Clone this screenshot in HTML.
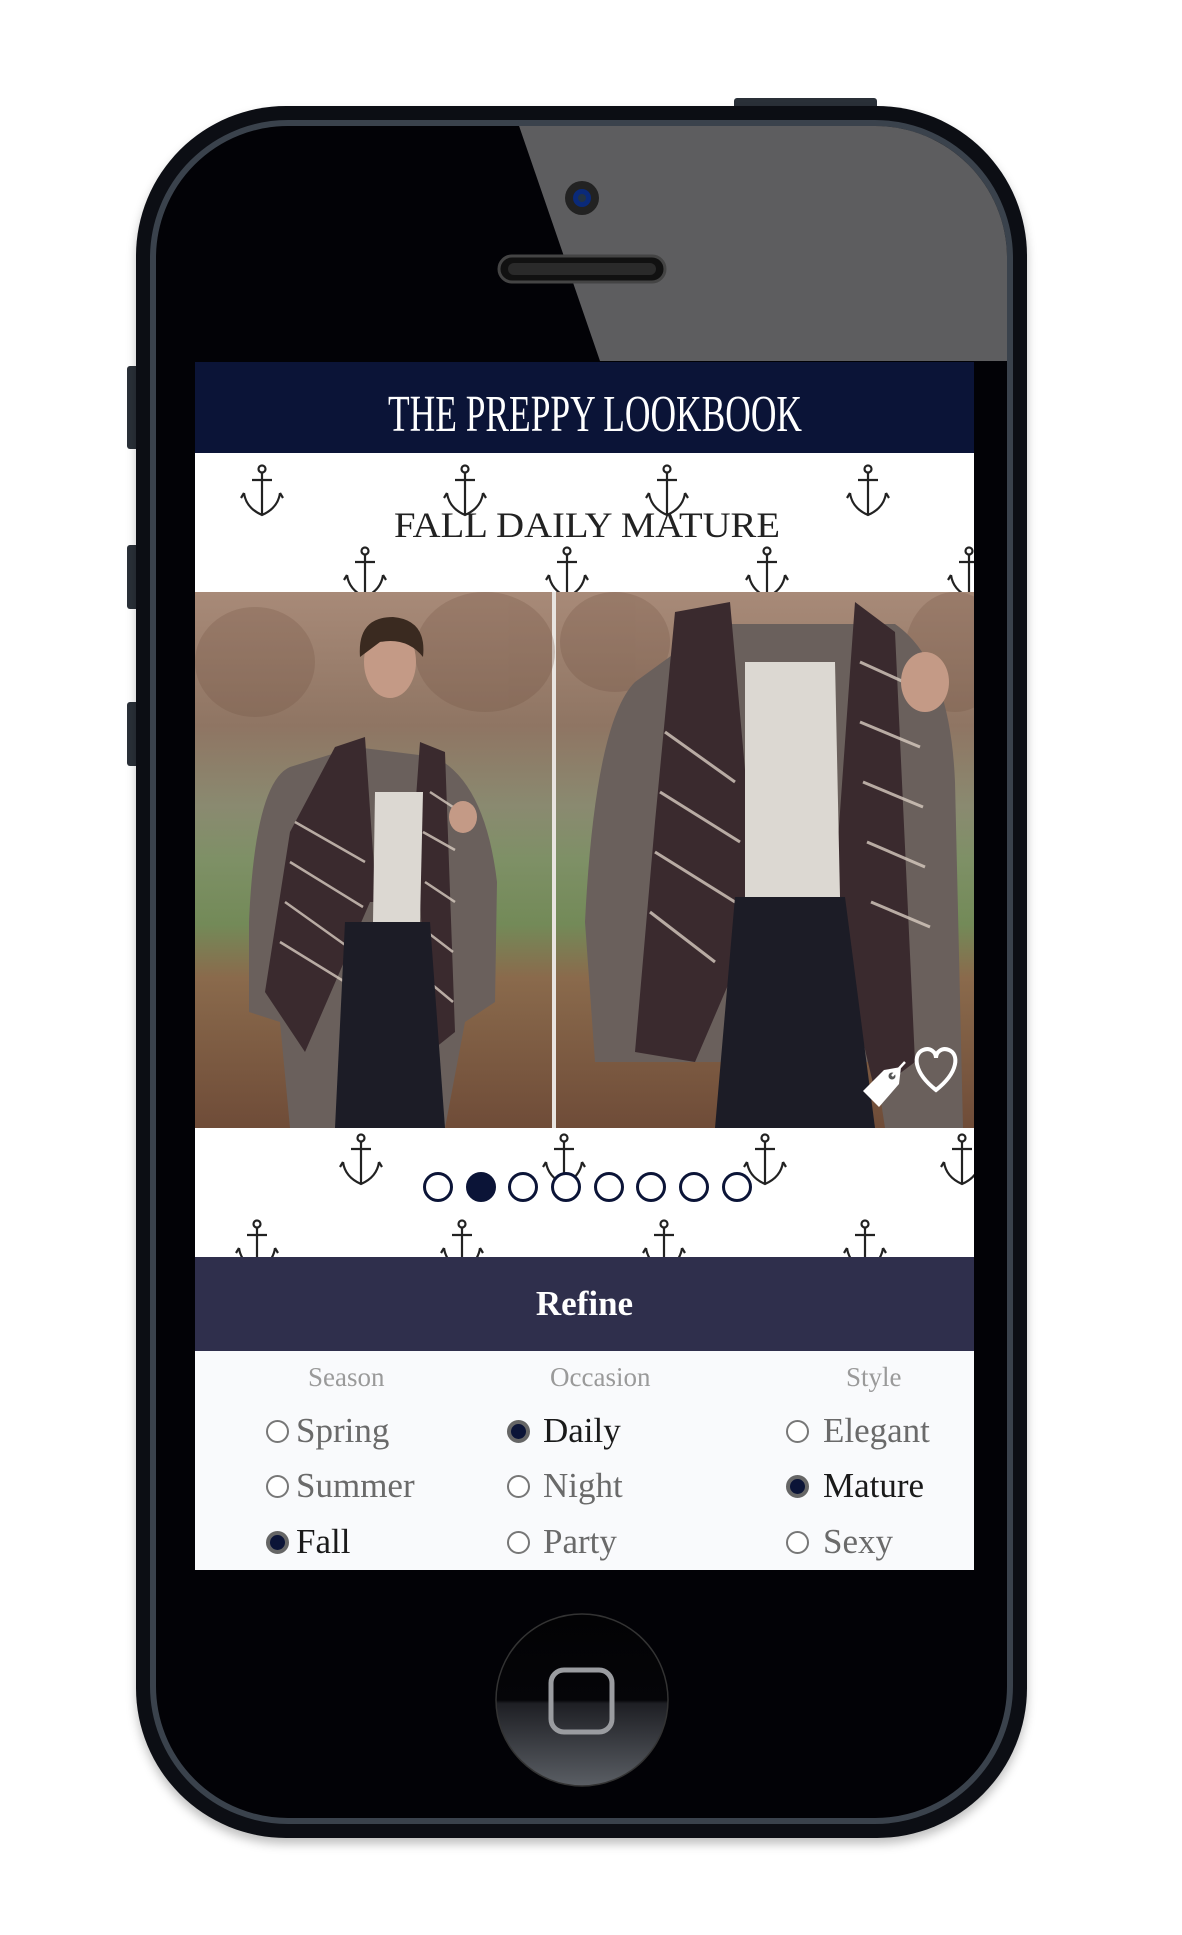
<!DOCTYPE html>
<html><head><meta charset="utf-8">
<style>
*{margin:0;padding:0;box-sizing:border-box}
body{width:1182px;height:1935px;background:#fff;position:relative;overflow:hidden;font-family:"Liberation Serif",serif}
.abs{position:absolute}
.phone{left:136px;top:106px;width:891px;height:1732px;border-radius:150px;background:#0c0e14;box-shadow:0 6px 10px rgba(0,0,0,.25)}
.rim{left:150px;top:120px;width:863px;height:1704px;border-radius:138px;border:6px solid #3a424c;background:#020206}
.screen{left:195px;top:362px;width:779px;height:1208px;background:#fff;overflow:hidden}
.refine{left:0;top:895px;width:779px;height:94px;background:#2f2f4c;color:#fff;text-align:center;font-size:35px;line-height:94px;font-weight:bold}
.opts{left:0;top:989px;width:779px;height:219px;background:#f9fafc}
.lbl{font-size:27px;color:#9a9a9a;line-height:30px}
.opt{font-size:35px;color:#6a6a6a;line-height:40px}
.opt.on{color:#1a1a1a}
.r{width:23px;height:23px;border-radius:50%;border:2px solid #777;background:#fff}
.r.on{background:#0b1437;border:4px solid #666}
.dot{width:30px;height:30px;border-radius:50%;border:3px solid #0b1437;background:#fff;top:810px}
</style></head><body>
<div class="abs" style="left:127px;top:366px;width:12px;height:83px;background:#2a3038;border-radius:3px"></div>
<div class="abs" style="left:127px;top:545px;width:12px;height:64px;background:#2a3038;border-radius:3px"></div>
<div class="abs" style="left:127px;top:702px;width:12px;height:64px;background:#2a3038;border-radius:3px"></div>
<div class="abs" style="left:734px;top:98px;width:143px;height:12px;background:#2a3038;border-radius:3px"></div>
<div class="abs phone"></div>
<div class="abs rim"></div>
<svg class="abs" style="left:0;top:0" width="1182" height="1935">
<defs><clipPath id="c"><rect x="156" y="126" width="851" height="1692" rx="132"/></clipPath></defs>
<polygon clip-path="url(#c)" points="517,120 1010,120 1010,361 600,361" fill="#5d5d5f"/>
<circle cx="582" cy="198" r="17" fill="#222"/><circle cx="582" cy="198" r="9" fill="#0a2a7a"/><circle cx="582" cy="198" r="4" fill="#234"/>
<rect x="499" y="256" width="166" height="26" rx="13" fill="#111" stroke="#444" stroke-width="3"/>
<rect x="508" y="263" width="148" height="12" rx="6" fill="#2a2a2a"/>
<defs><linearGradient id="hb" x1="0" y1="0" x2="0" y2="1"><stop offset="0" stop-color="#020204"/><stop offset=".5" stop-color="#050508"/><stop offset=".52" stop-color="#1e1f24"/><stop offset="1" stop-color="#5a5e64"/></linearGradient></defs>
<circle cx="582" cy="1700" r="86" fill="url(#hb)" stroke="#333" stroke-width="1.5"/>
<rect x="551" y="1670" width="61" height="62" rx="13" fill="none" stroke="#9a9ca0" stroke-width="5"/>
</svg>
<div class="abs screen">
 <svg class="abs" style="left:0;top:0" width="779" height="895">
  <rect x="0" y="0" width="779" height="91" fill="#0b1437"/>
  <text x="193" y="69" fill="#fff" font-family="Liberation Serif" font-size="52" textLength="414" lengthAdjust="spacingAndGlyphs">THE PREPPY LOOKBOOK</text>
  <defs>
   <g id="a" fill="none" stroke="#222" stroke-width="2.2">
    <circle cx="0" cy="-21" r="3.5"/><path d="M0,-17 V24 M-10,-10 H10 M-18,3 Q-16,18 0,25 Q16,18 18,3 M-18,3 l-3,5 M18,3 l3,5"/>
   </g>
   <linearGradient id="bg" x1="0" y1="0" x2="0" y2="1"><stop offset="0" stop-color="#a88a78"/><stop offset=".25" stop-color="#8f7563"/><stop offset=".4" stop-color="#8a8a70"/><stop offset=".5" stop-color="#7e9066"/><stop offset=".62" stop-color="#738a58"/><stop offset=".72" stop-color="#8a6a4c"/><stop offset="1" stop-color="#6f4c38"/></linearGradient>
  </defs>
  <use href="#a" x="67" y="128"/><use href="#a" x="270" y="128"/><use href="#a" x="472" y="128"/><use href="#a" x="673" y="128"/>
  <use href="#a" x="170" y="210"/><use href="#a" x="372" y="210"/><use href="#a" x="572" y="210"/><use href="#a" x="774" y="210"/>
  <use href="#a" x="166" y="797"/><use href="#a" x="369" y="797"/><use href="#a" x="570" y="797"/><use href="#a" x="767" y="797"/>
  <use href="#a" x="62" y="883"/><use href="#a" x="267" y="883"/><use href="#a" x="469" y="883"/><use href="#a" x="670" y="883"/>
  <text x="199" y="175" fill="#222" font-family="Liberation Serif" font-size="36" textLength="386" lengthAdjust="spacingAndGlyphs">FALL DAILY MATURE</text>
  <rect x="0" y="230" width="357" height="536" fill="url(#bg)"/>
  <rect x="361" y="230" width="418" height="536" fill="url(#bg)"/>
  <rect x="357" y="230" width="4" height="536" fill="#e8e4e0"/>
  <g fill="#6e4e3e" opacity=".25"><ellipse cx="60" cy="300" rx="60" ry="55"/><ellipse cx="290" cy="290" rx="70" ry="60"/><ellipse cx="420" cy="280" rx="55" ry="50"/><ellipse cx="760" cy="290" rx="50" ry="60"/></g>
  <path d="M54,560 Q60,420 95,405 L160,385 L240,395 Q290,420 302,520 L300,640 L270,660 L250,766 L95,766 L85,660 L54,650 Z" fill="#6a605c"/>
  <path d="M140,385 L170,375 L180,520 L215,520 L225,380 L250,390 L260,670 L235,690 L225,540 L175,540 L110,690 L70,630 L95,470 Z" fill="#3a2a2e"/>
  <g stroke="#d8ccc0" stroke-width="2.5" fill="none" opacity=".8"><path d="M100,460 L170,500 M95,500 L168,545 M90,540 L160,590 M85,580 L150,620 M235,430 L258,445 M228,470 L260,488 M230,520 L260,540 M232,570 L258,590 M234,620 L258,640"/></g>
  <path d="M180,430 L228,430 L225,560 L178,560 Z" fill="#dcd8d2"/>
  <path d="M150,560 L235,560 L250,766 L140,766 Z" fill="#1c1c26"/>
  <ellipse cx="195" cy="300" rx="26" ry="36" fill="#c49a86"/>
  <path d="M165,295 Q162,255 198,255 Q232,258 228,295 Q212,275 185,280 Z" fill="#3a2a20"/>
  <ellipse cx="268" cy="455" rx="14" ry="16" fill="#c49a86"/>
  <path d="M390,560 Q400,360 440,320 L520,262 L700,262 Q755,300 760,420 L768,766 L690,766 L680,700 L400,700 Z" fill="#6a605c"/>
  <path d="M480,250 L535,240 L560,520 L640,520 L660,240 L700,270 L720,700 L680,730 L640,560 L560,560 L500,700 L440,690 L460,460 Z" fill="#3a2a2e"/>
  <g stroke="#d8ccc0" stroke-width="3" fill="none" opacity=".8"><path d="M470,370 L540,420 M465,430 L545,480 M460,490 L540,540 M455,550 L520,600 M665,300 L720,325 M665,360 L725,385 M668,420 L728,445 M672,480 L730,505 M676,540 L735,565"/></g>
  <path d="M550,300 L640,300 L645,535 L550,535 Z" fill="#dcd8d2"/>
  <path d="M540,535 L650,535 L680,766 L520,766 Z" fill="#1c1c26"/>
  <ellipse cx="730" cy="320" rx="24" ry="30" fill="#c49a86"/>
  <path d="M684,745 L668,729 L689,708 L706,705 L704,722 Z" fill="#fff"/>
  <circle cx="697" cy="714" r="3.5" fill="#555"/>
  <path d="M697,714 L710,700" stroke="#fff" stroke-width="2.5"/>
  <path d="M741,742 C718,724 718,706 728,702 C735,699 741,704 741,710 C741,704 747,699 754,702 C764,706 764,724 741,742 Z" transform="translate(0,-14)" fill="none" stroke="#fff" stroke-width="4"/>
 </svg>
 <div class="abs dot" style="left:228px"></div>
 <div class="abs dot" style="left:271px;background:#0b1437"></div>
 <div class="abs dot" style="left:313px"></div>
 <div class="abs dot" style="left:356px"></div>
 <div class="abs dot" style="left:399px"></div>
 <div class="abs dot" style="left:441px"></div>
 <div class="abs dot" style="left:484px"></div>
 <div class="abs dot" style="left:527px"></div>
 <div class="abs refine">Refine</div>
 <div class="abs opts">
  <div class="abs lbl" style="left:113px;top:11px">Season</div>
  <div class="abs lbl" style="left:355px;top:11px">Occasion</div>
  <div class="abs lbl" style="left:651px;top:11px">Style</div>
  <div class="abs r" style="left:71px;top:69px"></div><div class="abs opt" style="left:101px;top:60px">Spring</div>
  <div class="abs r" style="left:71px;top:124px"></div><div class="abs opt" style="left:101px;top:115px">Summer</div>
  <div class="abs r on" style="left:71px;top:180px"></div><div class="abs opt on" style="left:101px;top:171px">Fall</div>
  <div class="abs r on" style="left:312px;top:69px"></div><div class="abs opt on" style="left:348px;top:60px">Daily</div>
  <div class="abs r" style="left:312px;top:124px"></div><div class="abs opt" style="left:348px;top:115px">Night</div>
  <div class="abs r" style="left:312px;top:180px"></div><div class="abs opt" style="left:348px;top:171px">Party</div>
  <div class="abs r" style="left:591px;top:69px"></div><div class="abs opt" style="left:628px;top:60px">Elegant</div>
  <div class="abs r on" style="left:591px;top:124px"></div><div class="abs opt on" style="left:628px;top:115px">Mature</div>
  <div class="abs r" style="left:591px;top:180px"></div><div class="abs opt" style="left:628px;top:171px">Sexy</div>
 </div>
</div>
</body></html>
